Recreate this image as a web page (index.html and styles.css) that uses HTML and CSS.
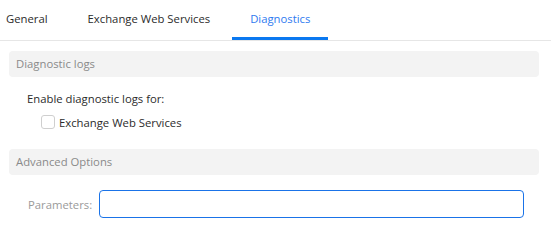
FILE: index.html
```html
<!DOCTYPE html>
<html>
<head>
<meta charset="utf-8">
<link rel="stylesheet" href="styles.css">
</head>
<body>
<div class="tabs">
  <div class="tab first">General</div>
  <div class="tab">Exchange Web Services</div>
  <div class="tab active">Diagnostics</div>
</div>
<div class="content">
  <div class="section-header">Diagnostic logs</div>
  <div class="section-body logs">
    <div class="line">Enable diagnostic logs for:</div>
    <label class="check-row">
      <span class="checkbox"></span>
      <span>Exchange Web Services</span>
    </label>
  </div>
  <div class="section-header">Advanced Options</div>
  <div class="section-body params">
    <span class="param-label">Parameters:</span>
    <div class="input"></div>
  </div>
</div>
</body>
</html>
```
FILE: styles.css
```css
* { box-sizing: border-box; }
html, body { margin: 0; padding: 0; background: #fff; }
body {
  font-family: "Open Sans", "Noto Sans", sans-serif;
  font-size: 11.3px;
  color: #2b2b2b;
}
.tabs {
  display: flex;
  gap: 4px;
  height: 41px;
  border-bottom: 1px solid #e6e6e6;
}
.tab {
  padding: 0 18px;
  height: 40px;
  white-space: nowrap;
  border-bottom: 3px solid transparent;
  line-height: 38px;
}
.tab.first { padding-left: 6px; }
.tab.active {
  color: #2f7bf0;
  border-bottom-color: #0a78f0;
}
.content {
  padding: 10px 12px 0 9px;
}
.section-header {
  height: 26px;
  line-height: 26px;
  background: #f3f3f3;
  border-radius: 4px;
  padding-left: 7px;
  color: #8a8a8a;
}
.logs {
  padding: 12px 0 17px 18px;
}
.line {
  height: 20px;
  line-height: 20px;
}
.check-row {
  display: flex;
  align-items: center;
  gap: 4px;
  height: 20px;
  margin-top: 3px;
  padding-left: 14px;
}
.checkbox {
  width: 14px;
  height: 14px;
  border: 1px solid #cfcfcf;
  border-radius: 3px;
  background: #fff;
}
.params {
  display: flex;
  align-items: center;
  padding: 15px 15px 0 19px;
}
.param-label {
  color: #9a9a9a;
  width: 71px;
}
.input {
  flex: 1;
  height: 28px;
  border: 1px solid #1a73e8;
  border-radius: 4px;
}
```
